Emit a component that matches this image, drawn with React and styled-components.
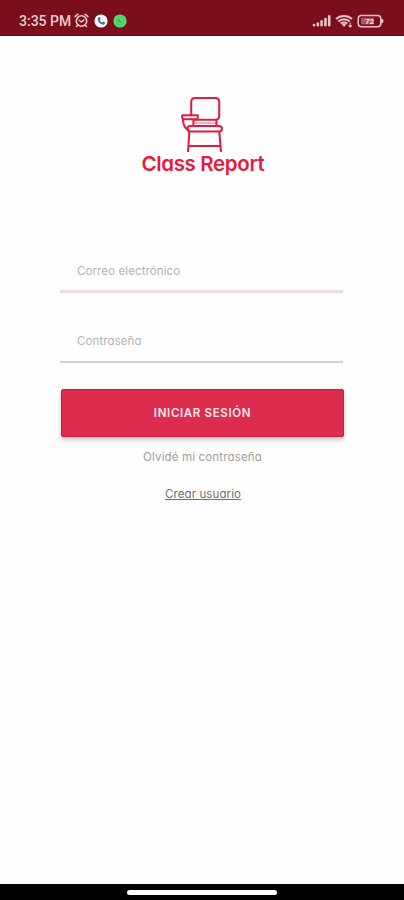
import React, { useState } from "react";
import styled, { createGlobalStyle } from "styled-components";

function StatusIcons() {
  return (
    <svg width="72" height="16" viewBox="0 0 72 16" fill="none">
      <g stroke="#e9c3c5" strokeWidth="2.6" strokeLinecap="round">
        <path d="M2 12.3V12M5.8 12.3V10.5M9.6 12.3V8.4M13.4 12.3V6M17.2 12.3V3.4" />
      </g>
      <g stroke="#e9c3c5" strokeWidth="2">
        <path d="M24 6C28.2 1.9 35.8 1.9 40 6M26.3 8.5C29.6 5.4 34.4 5.4 37.7 8.5M28.8 10.8C30.8 9 33.2 9 35.2 10.8" />
      </g>
      <path d="M29.8 11.5Q32 9.9 34.2 11.5L32 14Z" fill="#e9c3c5" />
      <path d="M38.2 9.4V14M36.5 12.4L38.2 14L39.9 12.4" stroke="#e9c3c5" strokeWidth="1.1" />
      <rect x="46.2" y="2.5" width="22.6" height="11.2" rx="3.2" stroke="#e9c3c5" strokeWidth="1.5" />
      <path d="M69.2 5.5Q71.6 5.8 71.6 8T69.2 10.5Z" fill="#e9c3c5" />
      <rect x="49" y="4.8" width="13" height="6.6" rx="1" fill="#a8525b" />
      <text x="53" y="11.1" fontFamily="Roboto, sans-serif" fontSize="8" fontWeight="700" fill="#f5dfe0">72</text>
    </svg>
  );
}

function AlarmIcon() {
  return (
    <svg width="15" height="15" viewBox="0 0 15 15" fill="none" stroke="#ebc9cb" strokeLinecap="round">
      <circle cx="7.5" cy="8" r="5.2" strokeWidth="1.6" />
      <path d="M1 3.6L4 1.2M14 3.6L11 1.2M3.5 12.3L2.5 13.5M11.5 12.3L12.5 13.5" strokeWidth="1.5" />
      <path d="M5.2 7.2L7.2 9L9.9 6.9" strokeWidth="1.4" />
    </svg>
  );
}

function CallIcon() {
  return (
    <svg width="14" height="14" viewBox="0 0 14 14">
      <circle cx="7" cy="7" r="6.6" fill="#f7f5fa" />
      <path d="M4.6 3.3L5.9 3L6.7 5.2L5.7 6.1Q6.4 7.7 8 8.4L9 7.4L11.1 8.4L10.7 9.8Q10 11 8.3 10.5Q4.2 9.2 3.8 5Q3.7 3.8 4.6 3.3Z" fill="#3974bb" />
    </svg>
  );
}

function WhatsappIcon() {
  return (
    <svg width="14" height="14" viewBox="0 0 14 14">
      <circle cx="7" cy="7" r="6.6" fill="#55dc73" />
      <path d="M3.5 10.6L4 8.6A3.7 3.7 0 1 1 5.4 10.1Z" fill="none" stroke="#3fbf5d" strokeWidth=".8" />
      <path d="M5.5 5.2Q5.8 7.8 8.6 8.4" fill="none" stroke="#2fa850" strokeWidth="1.3" />
    </svg>
  );
}

function Chair() {
  return (
    <svg width="42" height="56" viewBox="0 0 42 56" fill="none" stroke="#e6193f" strokeWidth="2" strokeLinejoin="round">
      <path d="M10.2 19V6Q10.2 2 14.2 2H34.2Q38.2 2 38.2 6V19.8Q38.2 23.8 34.2 23.8H12.2" />
      <path d="M1.2 19.3H16.8V21Q16.8 23.2 14.8 23.2H3.2Q1.2 23.2 1.2 21Z" />
      <path d="M1.8 23.2C2.2 29 4 33.4 8.5 33.8" />
      <path d="M12.4 24V30M35.4 24V30" />
      <path d="M12.4 27H35.4" strokeWidth="1" strokeOpacity=".65" />
      <path d="M9 30.1H37.8Q41 30.1 41 32.7T37.8 35.4H9Q6.4 35.4 6.4 32.7T9 30.1Z" />
      <path d="M8.4 35.6L7 56M38.3 35.6L40 56M7.8 50H39.4" />
    </svg>
  );
}

function App() {
  const [email, setEmail] = useState("");
  const [password, setPassword] = useState("");

  return (
    <Screen>
      <GlobalStyle />
      <StatusBar>
        <StatusLeft>
          <Time>3:35 PM</Time>
          <AlarmIcon />
          <CallIcon />
          <WhatsappIcon />
        </StatusLeft>
        <StatusIcons />
      </StatusBar>

      <Content>
        <Logo>
          <Chair />
          <Brand>Class Report</Brand>
        </Logo>

        <Form onSubmit={(e) => e.preventDefault()}>
          <Field
            type="email"
            placeholder="Correo electrónico"
            value={email}
            onChange={(e) => setEmail(e.target.value)}
          />
          <Field
            type="password"
            placeholder="Contraseña"
            $last
            value={password}
            onChange={(e) => setPassword(e.target.value)}
          />
          <Submit type="submit">INICIAR SESIÓN</Submit>
        </Form>

        <Forgot href="#">Olvidé mi contraseña</Forgot>
        <Create href="#">Crear usuario</Create>
      </Content>

      <NavBar>
        <Handle />
      </NavBar>
    </Screen>
  );
}

export default App;

const GlobalStyle = createGlobalStyle`
  * {
    box-sizing: border-box;
  }

  body {
    margin: 0;
    background: #fefefe;
    font-family: Inter, "Open Sans", sans-serif;
    font-feature-settings: "cv11" 1;
  }
`;

const Screen = styled.div`
  display: flex;
  flex-direction: column;
  width: 404px;
  height: 900px;
  overflow: hidden;
`;

const StatusBar = styled.header`
  display: flex;
  justify-content: space-between;
  align-items: center;
  height: 36px;
  padding: 6px 20px 0 19px;
  background: #7a0e1d;
  border-bottom: 1px solid #6d0716;
  flex-shrink: 0;
`;

const StatusLeft = styled.div`
  display: flex;
  align-items: center;

  svg + svg {
    margin-left: 5px;
  }
`;

const Time = styled.span`
  width: 54.5px;
  color: #ebcccd;
  font-family: Roboto, sans-serif;
  font-size: 14px;
  font-weight: 500;
  letter-spacing: 0;
  white-space: nowrap;
`;

const Content = styled.main`
  display: flex;
  flex-direction: column;
  align-items: center;
  flex: 1;
`;

const Logo = styled.div`
  display: flex;
  flex-direction: column;
  align-items: center;
  padding-top: 60px;
`;

const Brand = styled.h1`
  margin: -1px 0 0 2px;
  color: #e6193f;
  font-size: 20.5px;
  font-weight: 600;
  line-height: 26px;
  letter-spacing: -0.35px;
  white-space: nowrap;
`;

const Form = styled.form`
  display: flex;
  flex-direction: column;
  width: 284px;
  padding-top: 71px;
`;

const Field = styled.input`
  width: 283px;
  height: 45px;
  margin-bottom: ${(props) => (props.$last ? "26px" : "25px")};
  padding: 4px 17px 1px;
  border: none;
  border-bottom: ${(props) => (props.$last ? "2px solid #e5c8d1" : "3px solid #efdae1")};
  background: transparent;
  outline: none;
  font-family: inherit;
  font-feature-settings: inherit;
  font-size: 11.5px;
  letter-spacing: 0.1px;

  &::placeholder {
    color: #b3b3b3;
  }
`;

const Submit = styled.button`
  width: 283px;
  height: 48px;
  margin-left: 1px;
  padding-top: 1px;
  border: 1px solid #d11743;
  border-radius: 2px;
  background: #dc2d4e;
  color: #fbe9ed;
  box-shadow: 0 3px 5px rgba(0, 0, 0, 0.22);
  font-family: inherit;
  font-size: 11.5px;
  font-weight: 600;
  letter-spacing: 0.65px;
`;

const Forgot = styled.a`
  margin: 12px 0 0 1px;
  color: #a0a0a0;
  font-size: 11.5px;
  line-height: 16px;
  letter-spacing: 0.15px;
  text-decoration: none;
`;

const Create = styled.a`
  margin: 21px 0 0 2px;
  color: #707070;
  font-size: 11.5px;
  line-height: 16px;
  letter-spacing: 0.1px;
`;

const NavBar = styled.footer`
  display: flex;
  justify-content: center;
  align-items: center;
  height: 16px;
  background: #000;
`;

const Handle = styled.div`
  width: 150px;
  height: 5px;
  border-radius: 3px;
  background: #fff;
`;
